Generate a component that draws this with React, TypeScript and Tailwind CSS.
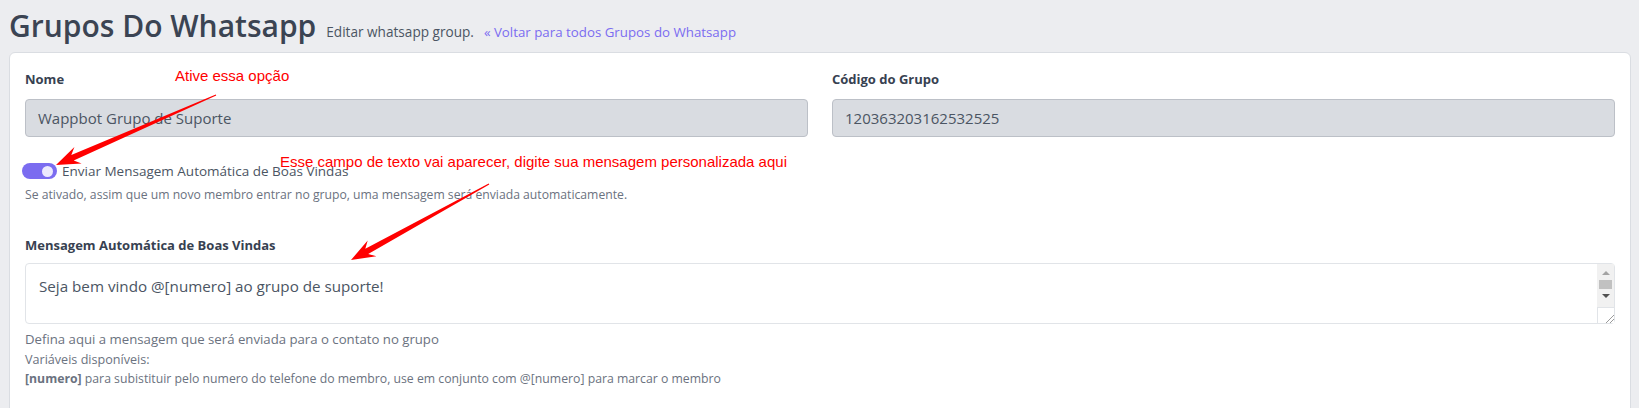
import React from "react";

type Pt = [number, number];

// red arrow drawn from tail to tip, widening towards the head
const arrowPoints = (tail: Pt, tip: Pt) => {
  const dx = tip[0] - tail[0];
  const dy = tip[1] - tail[1];
  const len = Math.hypot(dx, dy);
  const ux = dx / len;
  const uy = dy / len;
  const nx = -uy;
  const ny = ux;
  const headLen = 24;
  const bx = tip[0] - ux * headLen;
  const by = tip[1] - uy * headLen;
  const nbx = tip[0] - ux * (headLen - 6);
  const nby = tip[1] - uy * (headLen - 6);
  const pts: Pt[] = [
    [tail[0] + nx * 0.6, tail[1] + ny * 0.6],
    [nbx + nx * 3, nby + ny * 3],
    [bx + nx * 9, by + ny * 9],
    tip,
    [bx - nx * 9, by - ny * 9],
    [nbx - nx * 3, nby - ny * 3],
    [tail[0] - nx * 0.6, tail[1] - ny * 0.6],
  ];
  return pts.map((p) => `${p[0].toFixed(1)},${p[1].toFixed(1)}`).join(" ");
};

const Annotations = () => {
  return (
    <>
      <svg
        className="absolute left-0 top-0 pointer-events-none"
        width={1639}
        height={408}
      >
        <polygon points={arrowPoints([216, 95], [56, 165])} fill="#ff0000" />
        <polygon points={arrowPoints([489, 184], [351, 260])} fill="#ff0000" />
      </svg>
      <span className="absolute left-[175px] top-[67px] text-[15px] leading-[17px] text-[#ff0000] font-['Liberation_Sans',Arial,sans-serif] whitespace-nowrap">
        Ative essa opção
      </span>
      <span className="absolute left-[280px] top-[153px] text-[15px] leading-[17px] text-[#ff0000] font-['Liberation_Sans',Arial,sans-serif] whitespace-nowrap">
        Esse campo de texto vai aparecer, digite sua mensagem personalizada aqui
      </span>
    </>
  );
};

// classic scrollbar + resize grip as the browser draws them on the textarea
const FakeScrollbar = () => {
  return (
    <div className="absolute right-px top-px bottom-px w-[17px] flex flex-col pointer-events-none">
      <div className="flex-1 bg-[#f1f1f1] flex flex-col items-center pt-[7px]">
        <div className="w-0 h-0 border-l-[4px] border-r-[4px] border-b-[4px] border-l-transparent border-r-transparent border-b-[#a3a3a3]" />
        <div className="mt-[5px] w-[13px] h-[9px] bg-[#c1c1c1]" />
        <div className="mt-[5px] w-0 h-0 border-l-[4px] border-r-[4px] border-t-[4px] border-l-transparent border-r-transparent border-t-[#505050]" />
      </div>
      <div className="h-[16px] bg-white border-t border-l border-[#e1e4e8] relative">
        <svg className="absolute right-0 bottom-0" width="10" height="10">
          <line x1="2" y1="10" x2="10" y2="2" stroke="#9a9a9a" strokeWidth="1" />
          <line x1="6" y1="10" x2="10" y2="6" stroke="#9a9a9a" strokeWidth="1" />
        </svg>
      </div>
    </div>
  );
};

const App = () => {
  return (
    <div className="relative min-h-screen bg-[#ecedf0] pl-[9px] pr-[8px] pt-[8px] font-['Open_Sans','Noto_Sans',sans-serif] overflow-hidden">
      <div className="flex items-baseline leading-[36px] h-[36px] whitespace-nowrap">
        <h1 className="text-[30px] font-semibold text-[#3b4453]">
          Grupos Do Whatsapp
        </h1>
        <span className="ml-[10px] text-[13.6px] text-[#4b5563]">
          Editar whatsapp group.
        </span>
        <a className="ml-[10px] text-[13.3px] text-[#7b6cf0]" href="#">
          « Voltar para todos Grupos do Whatsapp
        </a>
      </div>

      <div className="mt-[8px] bg-white border border-[#dadde2] rounded-md px-[15px] pt-4 pb-10">
        <div className="grid grid-cols-2 gap-x-6">
          <div>
            <label className="block text-[13px] leading-[20px] font-bold text-[#374151]">
              Nome
            </label>
            <div className="mt-[10px] h-[38px] flex items-center px-3 bg-[#d9dce1] border border-[#bcc0c7] rounded-[4px] text-[15px] text-[#4b5563]">
              Wappbot Grupo de Suporte
            </div>
          </div>
          <div>
            <label className="block text-[13px] leading-[20px] font-bold text-[#374151]">
              Código do Grupo
            </label>
            <div className="mt-[10px] h-[38px] flex items-center px-3 bg-[#d9dce1] border border-[#bcc0c7] rounded-[4px] text-[15px] text-[#4b5563]">
              120363203162532525
            </div>
          </div>
        </div>

        <div className="mt-6 flex items-center h-[20px]">
          <div className="-ml-[3px] w-[35px] h-[16px] rounded-full bg-[#7b6cf0] flex items-center justify-end pr-[4px]">
            <div className="w-[11px] h-[11px] rounded-full bg-[#ece9fd]" />
          </div>
          <span className="ml-[5px] text-[13.5px] leading-[20px] text-[#4b5563]">
            Enviar Mensagem Automática de Boas Vindas
          </span>
        </div>
        <p className="mt-[5px] text-[12.2px] leading-[18px] text-[#6b7280]">
          Se ativado, assim que um novo membro entrar no grupo, uma mensagem será enviada automaticamente.
        </p>

        <label className="block mt-[31px] text-[13px] leading-[20px] font-bold text-[#374151]">
          Mensagem Automática de Boas Vindas
        </label>
        <div className="relative mt-[8px]">
          <textarea
            className="block w-full h-[61px] pl-[13px] pr-[20px] py-[11px] border border-[#e1e4e8] rounded-[4px] text-[15.2px] leading-[22px] text-[#4b5563] overflow-hidden resize-none outline-none"
            defaultValue="Seja bem vindo @[numero] ao grupo de suporte!"
          />
          <FakeScrollbar />
        </div>
        <div className="mt-[6px] leading-[19.5px] text-[#6b7280]">
          <p className="text-[13.2px]">Defina aqui a mensagem que será enviada para o contato no grupo</p>
          <p className="text-[12.6px]">Variáveis disponíveis:</p>
          <p className="text-[12.25px]">
            <b className="font-bold">[numero]</b> para subistituir pelo numero do telefone do membro, use em conjunto com @[numero] para marcar o membro
          </p>
        </div>
      </div>

      <Annotations />
    </div>
  );
};

export default App;
